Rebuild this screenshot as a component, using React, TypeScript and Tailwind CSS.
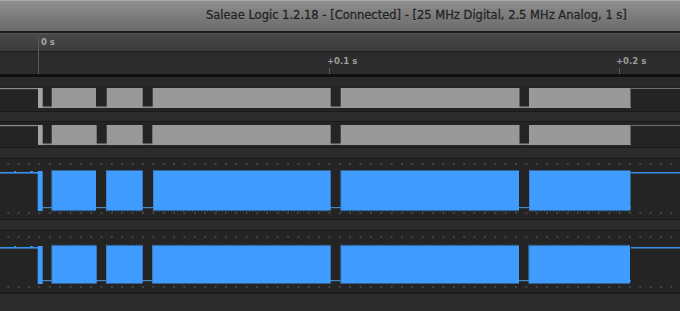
import React from "react";

// time axis: x=38 is 0 s, ~290px per 100 ms
type Seg = [number, number];

const ROW1: Seg[] = [
  [51.7, 96],
  [106.7, 142.7],
  [152.7, 330.7],
  [340.7, 519.5],
  [529, 630.5],
];
const ROW2: Seg[] = [
  [51.7, 96.7],
  [106.7, 142.7],
  [152.3, 330.7],
  [340.7, 519.5],
  [529, 630.5],
];
const ROW3: Seg[] = [
  [51.7, 96],
  [106, 142.7],
  [153, 330.7],
  [340.7, 519],
  [529, 630.5],
];
const ROW4: Seg[] = [
  [51.7, 96.7],
  [106, 142.7],
  [152.3, 330.7],
  [340.7, 519],
  [528.7, 630],
];

const DOT_XS = Array.from({ length: 66 }, (_, i) => 8.3 + i * 10.36);

function Dots({ y }: { y: number }) {
  return (
    <g fill="#434343">
      {DOT_XS.map((x) => (
        <rect key={x} x={x - 1} y={y - 1} width={2} height={2} />
      ))}
    </g>
  );
}

function GrayChannel({ hi, lo, blocks }: { hi: number; lo: number; blocks: Seg[] }) {
  return (
    <svg width={680} height={25} className="block">
      <rect x={0} y={hi} width={38} height={1.2} fill="#8e8e8e" />
      <rect x={38} y={lo - 1.5} width={593} height={1.5} fill="#8c8c8c" />
      <rect x={38} y={hi} width={4.7} height={lo - hi} fill="#a3a3a3" />
      {blocks.map(([a, b]) => (
        <rect key={a} x={a} y={hi} width={b - a} height={lo - hi} fill="#999999" />
      ))}
      <rect x={631} y={hi} width={49} height={1} fill="#6f6f6f" />
    </svg>
  );
}

function BlueChannel({
  h,
  hi,
  lo,
  blocks,
  dotTop,
  dotBottom,
  jagTop,
}: {
  h: number;
  hi: number;
  lo: number;
  blocks: Seg[];
  dotTop: number;
  dotBottom: number;
  jagTop: boolean;
}) {
  return (
    <svg width={680} height={h} className="block">
      <Dots y={dotTop} />
      <Dots y={dotBottom} />
      <rect x={0} y={hi + 1} width={38} height={1.6} fill="#3a8fe8" />
      <rect x={14} y={hi} width={2} height={1} fill="#3a8fe8" />
      <rect x={30} y={hi} width={3} height={1} fill="#3a8fe8" />
      <rect x={38} y={lo - 3} width={593} height={1.2} fill="#4a86c0" />
      <rect x={37.7} y={hi} width={5} height={lo - hi + 1} fill="#3f9cff" />
      {blocks.map(([a, b]) => (
        <g key={a}>
          <rect x={a} y={hi - 0.5} width={b - a} height={lo - hi + 1} fill="#409dff" />
          <rect x={a} y={hi - 0.5} width={1} height={lo - hi + 1} fill="#3a86d6" />
          <line
            x1={a}
            x2={b}
            y1={jagTop ? hi - 1 : lo + 1}
            y2={jagTop ? hi - 1 : lo + 1}
            stroke="#3478c4"
            strokeWidth={1.2}
            strokeDasharray="1 2"
          />
        </g>
      ))}
      <rect x={631} y={hi + 1} width={49} height={1.5} fill="#3a8fe8" />
    </svg>
  );
}

export default function App() {
  return (
    <div className="w-[680px] h-[311px] overflow-hidden bg-[#262626] flex flex-col font-['DejaVu_Sans',sans-serif]">
      {/* window title */}
      <div className="h-[31px] shrink-0 bg-gradient-to-b from-[#8f8f8f] to-[#6a6a6a] border-t border-[#a9a9a9] flex items-center pl-[206px]">
        <span className="text-[11.5px] text-[#232323] whitespace-nowrap [-webkit-text-stroke:0.3px_#232323] [text-shadow:0_1px_0_rgba(255,255,255,0.12)]">
          Saleae Logic 1.2.18 - [Connected] - [25 MHz Digital, 2.5 MHz Analog, 1 s]
        </span>
      </div>
      <div className="h-[2px] shrink-0 bg-[#1c1c1c]" />
      <div className="h-px shrink-0 bg-[#565656]" />

      {/* header strip */}
      <div className="relative h-[18px] shrink-0 bg-gradient-to-b from-[#484848] to-[#3b3b3b] border-b border-[#1d1d1d]">
        <span className="absolute left-[41px] top-[4px] text-[8.5px] font-bold text-[#a6a6a6] leading-none">0 s</span>
      </div>

      {/* time ruler */}
      <div className="relative h-[22px] shrink-0 bg-[#2c2c2c]">
        <div className="absolute left-[38px] top-[-14px] h-[36px] w-px bg-[#5a5a5a]" />
        <span className="absolute left-[327px] top-[5px] text-[8.5px] font-bold text-[#9c9c9c] leading-none">+0.1 s</span>
        <div className="absolute left-[329px] top-[16px] h-[6px] w-px bg-[#5a5a5a]" />
        <span className="absolute left-[616px] top-[5px] text-[8.5px] font-bold text-[#9c9c9c] leading-none">+0.2 s</span>
        <div className="absolute left-[619px] top-[16px] h-[6px] w-px bg-[#5a5a5a]" />
      </div>
      <div className="h-[3px] shrink-0 bg-[#101010]" />

      <div className="h-[9px] shrink-0 bg-[#2a2a2a]" />

      {/* digital channel 0 */}
      <div className="bg-[#242424]">
        <GrayChannel hi={2} lo={22} blocks={ROW1} />
      </div>
      <div className="h-px bg-[#1a1a1a]" />
      <div className="h-[9px] bg-[#2b2b2b]" />
      <div className="h-px bg-[#1a1a1a]" />

      {/* digital channel 1 */}
      <div className="bg-[#242424]">
        <GrayChannel hi={3} lo={23} blocks={ROW2} />
      </div>
      <div className="h-px bg-[#1a1a1a]" />
      <div className="h-[10px] bg-[#2b2b2b]" />
      <div className="h-px bg-[#1a1a1a]" />

      {/* digital channel 2 */}
      <div className="bg-[#242424]">
        <BlueChannel h={60} hi={12} lo={51} blocks={ROW3} dotTop={5} dotBottom={54} jagTop={false} />
      </div>
      <div className="h-px bg-[#1a1a1a]" />
      <div className="h-[10px] bg-[#2b2b2b]" />
      <div className="h-px bg-[#1a1a1a]" />

      {/* digital channel 3 */}
      <div className="bg-[#242424]">
        <BlueChannel h={61} hi={15} lo={52} blocks={ROW4} dotTop={6} dotBottom={56} jagTop />
      </div>
      <div className="h-[2px] bg-[#1a1a1a]" />
      <div className="flex-1 bg-[#2b2b2b]" />
    </div>
  );
}
